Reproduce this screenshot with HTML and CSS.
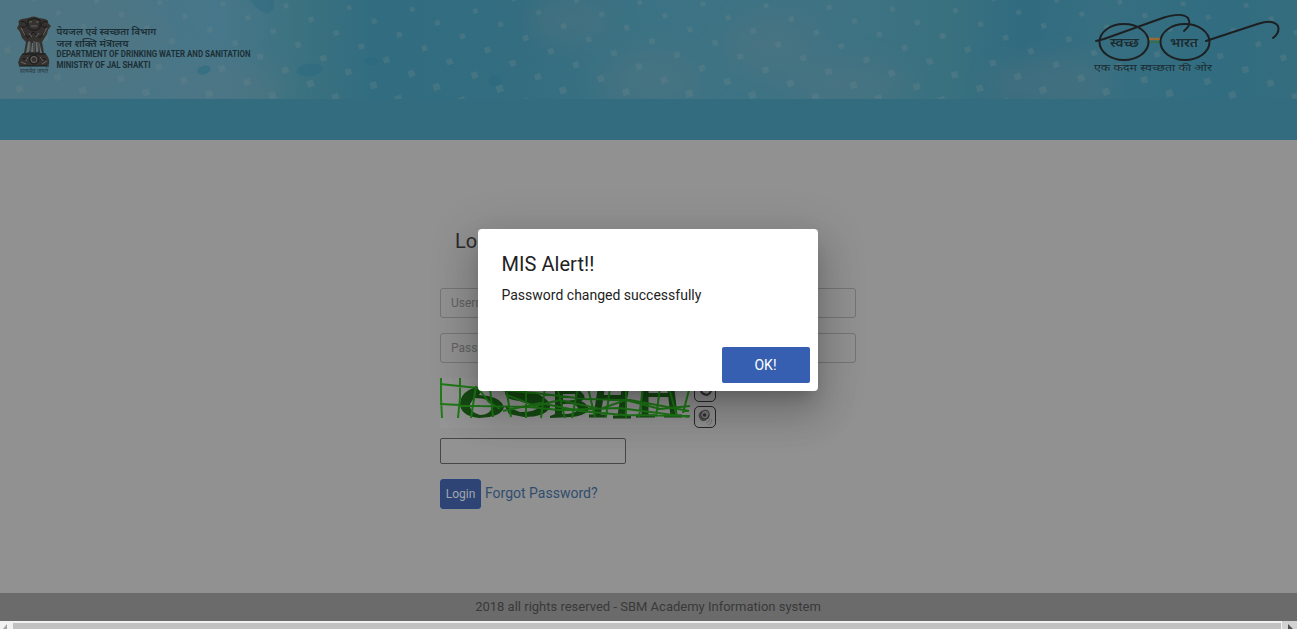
FILE: index.html
```
<!DOCTYPE html>
<html lang="en">
<head>
<meta charset="utf-8">
<title>SBM Academy Login</title>
<link rel="stylesheet" href="styles.css">
</head>
<body>
<header class="banner">
  <svg class="banner-pattern" width="1297" height="99" aria-hidden="true">
    <defs><filter id="soft" x="-20%" y="-50%" width="140%" height="200%"><feGaussianBlur stdDeviation="13"/></filter></defs>
    <g filter="url(#soft)" class="haze">
      <ellipse cx="30" cy="45" rx="140" ry="75"/><ellipse cx="225" cy="90" rx="60" ry="28"/>
      <ellipse cx="570" cy="20" rx="40" ry="22"/><ellipse cx="650" cy="80" rx="50" ry="28"/>
      <ellipse cx="770" cy="45" rx="45" ry="30"/><ellipse cx="850" cy="85" rx="60" ry="22"/><ellipse cx="1050" cy="85" rx="60" ry="28"/>
    </g>
    <g class="drops"><ellipse cx="204" cy="70" rx="7" ry="4.5" transform="rotate(-15 204 70)"/><ellipse cx="310" cy="70" rx="13" ry="6.5" transform="rotate(-5 310 70)"/><ellipse cx="371" cy="61" rx="7" ry="4"/><ellipse cx="495" cy="81" rx="6" ry="6"/></g>
    <path class="corner" d="M250 0H274V10L268 14Q257 11 250 0Z"/>
    <g id="diamonds" class="diamonds"></g>
  </svg>
  <div class="banner-content">
    <div class="ministry">
      <svg class="emblem" width="36" height="60" viewBox="0 0 36 60">
        <path fill="#34312f" d="M12 3Q18 0 23 3L29 4Q33 5 32 8L35 11L32 15L31 19L28 24L26 27L28 38Q32 40 33 45Q34 50 31 51H4Q1 49 3 45Q4 40 8 38L10 27L6 23L4 17L1 13L3 9Q1 5 6 4Z"/>
        <path fill="#5c7074" d="M12 27L14 26L13 37L10 38ZM16 28H17V37H15ZM19.500 27H21L22 37H20ZM23 26L26 38H24Z"/>
        <g fill="none" stroke="#161a1b" stroke-width="1"><path d="M5 7Q9 5 11 10Q8 14 5 11M31 7Q27 5 25 10Q28 14 31 11M12 5Q18 2 24 5V13Q18 18 12 13ZM7 16L12 23L17 17L24 23L29 16M6 39H30M3 51H33M6 44H12M24 44H30"/><circle cx="18" cy="44.500" r="4.500"/></g>
        <g fill="none" stroke="#837c77" stroke-width=".7"><path d="M14 27V36M18 26V37M22 27V36M13 7H16M20 7H23M15 11H21M5 13L9 20M31 13L27 20M13 18L16 22M23 18L20 22M5 47L10 49M26 49L31 46M12 42L10 46M24 42L27 46"/><circle cx="18" cy="44.500" r="3"/></g>
        <text x="4" y="57.500" font-size="5.500" textLength="28" lengthAdjust="spacingAndGlyphs">सत्यमेव जयते</text>
      </svg>
      <svg class="ministry-name" width="200" height="52" viewBox="0 0 200 52">
        <text x=".5" y="16" textLength="99.500" lengthAdjust="spacingAndGlyphs">पेयजल एवं स्वच्छता विभाग</text>
        <text x=".5" y="27.500" textLength="72" lengthAdjust="spacingAndGlyphs">जल शक्ति मंत्रालय</text>
        <text class="latin" x=".5" y="38.200" textLength="194" lengthAdjust="spacingAndGlyphs">DEPARTMENT OF DRINKING WATER AND SANITATION</text>
        <text class="latin" x=".5" y="49" textLength="94" lengthAdjust="spacingAndGlyphs">MINISTRY OF JAL SHAKTI</text>
      </svg>
    </div>
    <svg class="mission" width="190" height="66" viewBox="1092 10 190 66">
      <path d="M1149 39H1160" stroke="#986b32" stroke-width="2.400"/><path d="M1149 42H1160" stroke="#336f50" stroke-width="2"/>
      <g fill="none" stroke="#1d2023" stroke-width="2"><ellipse cx="1124" cy="42" rx="24.500" ry="18"/><ellipse cx="1185" cy="42" rx="24.500" ry="18"/>
      <path stroke-linecap="round" d="M1096 41L1104 39L1164 17.500Q1182 12 1188 18Q1192 25 1184 31"/><path stroke-linecap="round" d="M1206 41L1212 39L1259 23.500Q1273 19 1278 26Q1280 33 1273 38"/></g>
      <text class="lens" x="1110" y="46.500" textLength="29" lengthAdjust="spacingAndGlyphs">स्वच्छ</text>
      <text class="lens" x="1170" y="46.500" textLength="28" lengthAdjust="spacingAndGlyphs">भारत</text>
      <text class="slogan" x="1094" y="71" textLength="118" lengthAdjust="spacingAndGlyphs">एक कदम स्वच्छता की ओर</text>
    </svg>
  </div>
</header>
<nav class="navbar"></nav>
<main class="content">
  <form class="login">
    <h1 class="login-title">Login</h1>
    <input class="field" type="text" placeholder="Username">
    <input class="field" type="password" placeholder="Password">
    <div class="captcha">
      <svg class="captcha-image" width="250" height="50" viewBox="0 0 250 50">
        <rect width="250" height="50" fill="#949494"/>
        <g fill="#154a13" fill-rule="evenodd">
          <path d="M52 7Q22 8 20 25Q20 38 39 40Q62 39 64 29Q62 21 48 18L39 17L42 12ZM34 20Q52 20 52 29Q50 37 40 37Q29 34 30 26Z"/>
          <path d="M65 13L94 14Q111 22 110 29Q106 39 84 39L69 36L65 28L80 34Q96 34 99 29L80 23Q64 22 65 13Z"/>
          <path d="M115 12H139Q149 20 141 23Q150 27 148 33Q143 38 132 39L110 40V38L115 36ZM123 16V23L135 22V16ZM123 26L122 36Q138 36 138 30Q136 25 123 26Z"/>
        </g>
        <g fill="none" stroke="#154a13">
          <path stroke-width="7" d="M161 12L157 38M185 12L181 38"/><path stroke-width="7" d="M205 12V38M231 12L234 38"/>
          <path stroke-width="4" d="M160 19H184M207 17H231"/>
          <path stroke-width="3" d="M149 38H167M173 39H191M196 38H215M224 38H242"/>
        </g>
        <g fill="none" stroke="#1f7a17" stroke-width="2"><path d="M1 0V20L2 40M20 0V20L18 40M36 8L31 40M50 10L53 39M66 10L71 39M86 10V40M105 9L101 40M117 9L125 40M138 9L132 40M148 10L155 39M170 10L166 39M186 10V40M203 10L199 39M220 10L216 39M229 10L237 39M249 12L243 35M0 6L38 10L95 15L145 21L190 22L249 33M0 26L40 28L89 29L119 32L179 30L249 39M38 10L49 24L60 31M67 17L95 28L120 22L160 31L186 22L220 31L250 28M63 33L100 25L140 33L184 37L250 38"/></g>
      </svg>
      <div class="captcha-tools">
        <button class="tool" type="button"><svg width="20" height="20" viewBox="0 0 20 20"><path d="M14 7Q8 4 6 9Q6 13 12 14Q15 13 16 10M10 9L15 6" fill="none" stroke="#333" stroke-width="2.200"/></svg></button>
        <button class="tool" type="button"><svg width="20" height="20" viewBox="0 0 20 20"><ellipse cx="9" cy="8.500" rx="5.500" ry="5" fill="#505050"/><ellipse cx="10" cy="7.500" rx="4" ry="4.400" transform="rotate(30 10 7.500)" fill="#777" stroke="#333"/><circle cx="9.500" cy="8" r="1.800" fill="#303030"/><path d="M5 12Q7 15 11 13" fill="none" stroke="#444"/><path d="M11 16Q15 15 15 11M13 18Q17 17 17 12" fill="none" stroke="#747474"/></svg></button>
      </div>
    </div>
    <input class="captcha-input" type="text">
    <div class="actions"><button class="login-button" type="button">Login</button><a class="forgot">Forgot Password?</a></div>
  </form>
</main>
<footer class="footer">2018 all rights reserved - SBM Academy Information system</footer>
<div class="scroll-track">
  <span class="scroll-left"><svg width="13" height="8"><path d="M7 3V8H3Z" fill="#a3a3a3"/></svg></span><span class="scroll-thumb"></span><span class="scroll-right"><svg width="15" height="8"><path d="M6 3V8H11Z" fill="#505050"/></svg></span>
</div>
<section class="dialog" role="alertdialog">
  <h2 class="dialog-title">MIS Alert!!</h2>
  <p class="dialog-message">Password changed successfully</p>
  <button class="dialog-button" type="button">OK!</button>
</section>
<script src="pattern.js"></script>
</body>
</html>
```
FILE: styles.css
```
* { box-sizing: border-box; }
body { margin: 0; width: 1297px; height: 629px; overflow: hidden; display: flex; flex-direction: column; background: #919191; font-family: Roboto, sans-serif; color: #222; }
button, input { font-family: inherit; }
.banner { height: 99px; flex: none; display: grid; background: linear-gradient(90deg, #4a7585 0, #47778a 17%, #3c7280 23%, #316c80 29%, #346d80 40%, #3c7384 50%, #3f7384 64%, #39717f 73%, #316b80 79%, #376f81 85%, #316c80 94%, #346d7e 100%); }
.banner-pattern, .banner-content { grid-area: 1 / 1; }
.haze { fill: #54747f; opacity: .4; }
.drops { fill: #2b6a80; opacity: .55; }
.corner { fill: #2b6a80; opacity: .4; }
.diamonds { fill: #6b868c; opacity: .32; }
.banner-content { display: flex; justify-content: space-between; z-index: 0; padding: 10px 15px 0 15.5px; }
.ministry { display: flex; gap: 4.5px; }
.emblem { margin-top: 5px; }
.emblem text { font-family: "Noto Sans", sans-serif; fill: #263b43; }
.ministry-name { overflow: visible; margin-top: 9px; font-family: "Noto Sans", sans-serif; font-size: 10px; font-weight: 600; fill: #1c2f36; }
.latin { font-family: Roboto, sans-serif; font-size: 8.8px; font-weight: 700; }
.mission { font-family: "Noto Sans", sans-serif; fill: #1b2c32; }
.lens { font-size: 12px; font-weight: 600; }
.slogan { font-size: 9.5px; font-weight: 400; }
.navbar { height: 41px; flex: none; background: #326c7e; }
.content { height: 453px; flex: none; display: flex; justify-content: center; padding-top: 89px; }
.login { width: 417px; display: flex; flex-direction: column; align-items: flex-start; }
.login-title { margin: 0 0 35px 15px; font-size: 20px; line-height: 24px; font-weight: 400; color: #2b2b2b; }
.field { width: 416px; height: 30px; margin-bottom: 15px; padding: 0 10px; border: 1px solid #757575; border-radius: 3px; background: transparent; font-size: 12px; }
.field::placeholder { color: #626262; }
.captcha { display: flex; gap: 4px; height: 50px; }
.captcha-tools { display: flex; flex-direction: column; gap: 4px; padding-top: 2px; }
.tool { width: 22px; height: 22px; padding: 0; border: 1px solid #292929; border-radius: 5px; background: transparent; display: flex; flex: none; }
.captcha-input { width: 186px; height: 26px; margin-top: 10px; border: 1px solid #464646; border-radius: 2px; background: #929292; }
.actions { display: flex; gap: 4px; margin-top: 15px; }
.login-button { width: 41px; height: 30px; padding: 0; border: 1px solid #2b437c; border-radius: 3px; background: #2d4475; color: #a3a6ad; font-size: 12px; }
.forgot { color: #304d70; font-size: 14px; line-height: 28px; }
.footer { height: 28px; flex: none; background: #6b6b6b; color: #393939; text-align: center; font-size: 13px; line-height: 28px; padding-right: 1px; }
.scroll-track { display: flex; height: 8px; flex: none; background: #f1f1f1; }
.scroll-left { width: 13px; display: flex; }
.scroll-thumb { width: 1268px; margin-top: 2px; background: #c1c1c1; }
.scroll-right { margin-left: 1px; width: 15px; display: flex; background: #d2d2d2; }
.dialog { position: absolute; left: 478px; top: 229px; width: 340px; height: 162px; padding: 23px 8px 8px 23.5px; border-radius: 4px; background: #fff; display: flex; flex-direction: column; box-shadow: 0 11px 15px -7px rgba(0,0,0,.2), 0 24px 38px 3px rgba(0,0,0,.14), 0 9px 46px 8px rgba(0,0,0,.12); }
.dialog-title { margin: 0; font-size: 20px; line-height: 24px; font-weight: 400; letter-spacing: .05px; }
.dialog-message { margin: 9px 0 0; font-size: 14px; line-height: 20px; }
.dialog-button { align-self: flex-end; margin-top: auto; width: 88px; height: 36px; padding: 0 1px 0 0; border: 0; border-radius: 2px; background: #365fb1; color: #fff; font-size: 14px; }
```
FILE: pattern.js
```
const group = document.getElementById('diamonds');
for (let row = -4; row < 16; row++) {
  for (let col = -12; col < 24; col++) {
    const x = 286 + col * 63.15 + row * 25.1;
    const y = 6 + col * 1.65 + row * 13.5;
    if (x < -5 || x > 1302 || y < -5 || y > 104) continue;
    const size = 4.5 + y * 0.025;
    const square = document.createElementNS('http://www.w3.org/2000/svg', 'rect');
    square.setAttribute('x', x - size / 2);
    square.setAttribute('y', y - size / 2);
    square.setAttribute('width', size);
    square.setAttribute('height', size);
    square.setAttribute('transform', `rotate(-18 ${x} ${y})`);
    group.appendChild(square);
  }
}
```
